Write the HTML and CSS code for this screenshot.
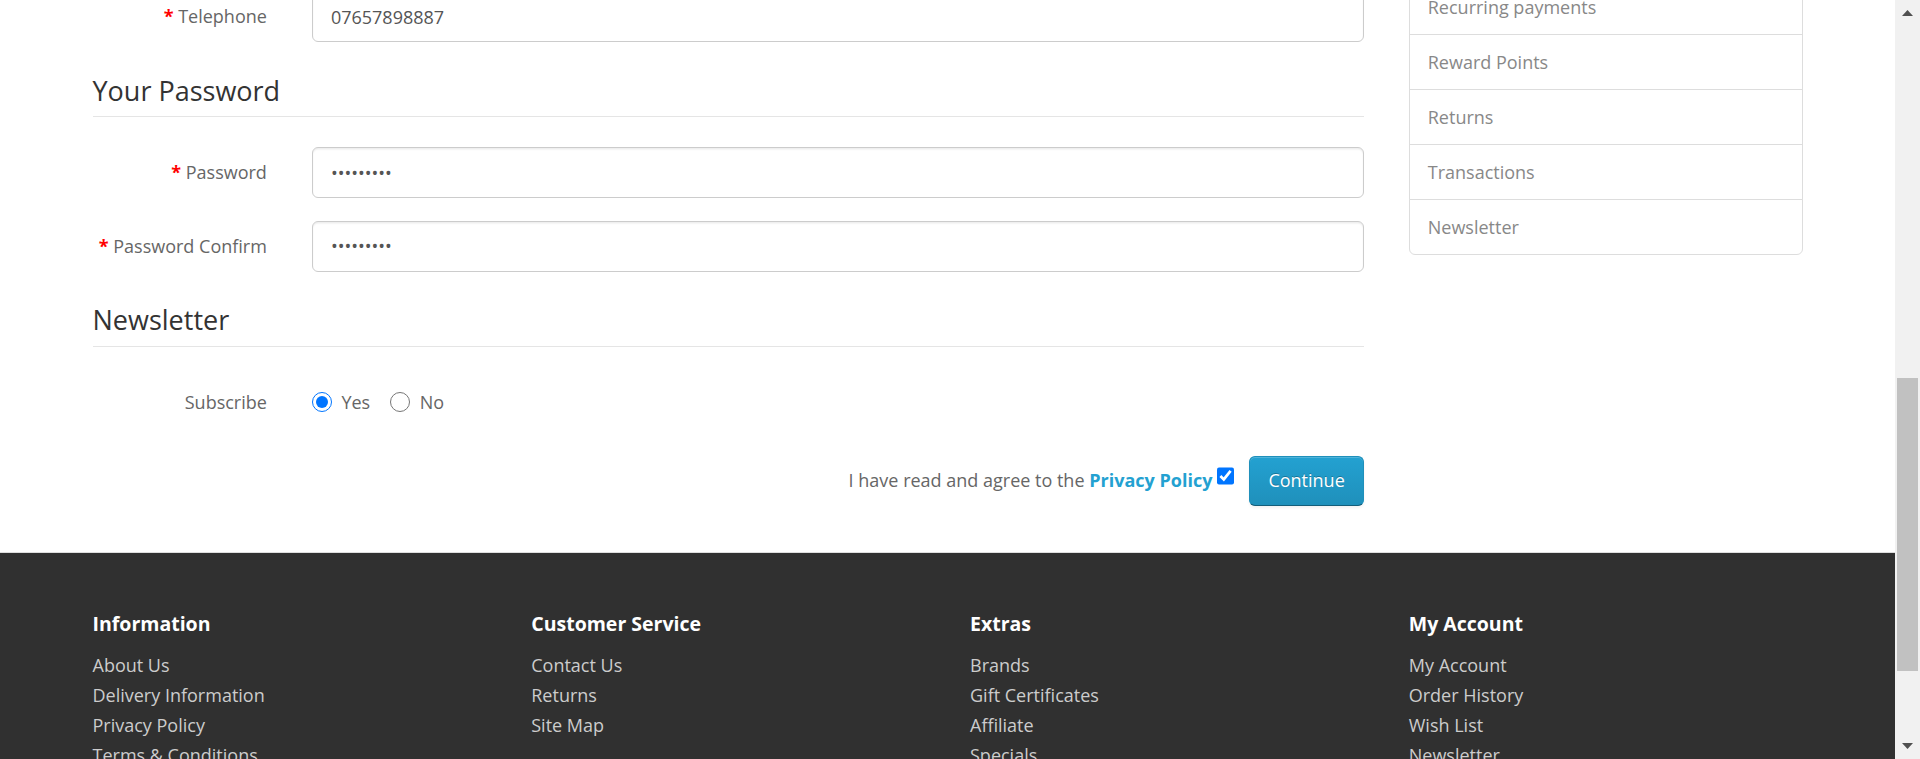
FILE: index.html
```html
<!DOCTYPE html>
<html lang="en">
<head>
<meta charset="utf-8">
<title>Register Account</title>
<link rel="stylesheet" href="styles.css">
</head>
<body>
<div class="viewport">
  <div class="container main">
    <div class="row">
      <div class="col-9">
        <form class="form-horizontal">
          <fieldset>
            <div class="form-group required">
              <label class="control-label" for="tel">Telephone</label>
              <div class="field"><input id="tel" class="form-control" type="tel" value="07657898887"></div>
            </div>
          </fieldset>
          <fieldset>
            <legend>Your Password</legend>
            <div class="form-group required">
              <label class="control-label" for="pw">Password</label>
              <div class="field"><input id="pw" class="form-control" type="password" value="123456789"></div>
            </div>
            <div class="form-group required">
              <label class="control-label" for="pw2">Password Confirm</label>
              <div class="field"><input id="pw2" class="form-control" type="password" value="123456789"></div>
            </div>
          </fieldset>
          <fieldset>
            <legend>Newsletter</legend>
            <div class="form-group">
              <label class="control-label">Subscribe</label>
              <div class="field radios">
                <label class="radio-inline"><input type="radio" name="newsletter" value="1" checked>Yes</label>
                <label class="radio-inline"><input type="radio" name="newsletter" value="0">No</label>
              </div>
            </div>
          </fieldset>
          <div class="buttons">
            <span class="agree-text">I have read and agree to the <a class="agree" href="#"><b>Privacy Policy</b></a></span>
            <input class="agree-box" type="checkbox" name="agree" value="1" checked>
            <button type="button" class="btn btn-primary">Continue</button>
          </div>
        </form>
      </div>
      <aside class="col-3">
        <div class="list-group">
          <a href="#" class="list-group-item">Recurring payments</a>
          <a href="#" class="list-group-item">Reward Points</a>
          <a href="#" class="list-group-item">Returns</a>
          <a href="#" class="list-group-item">Transactions</a>
          <a href="#" class="list-group-item">Newsletter</a>
        </div>
      </aside>
    </div>
  </div>
  <footer class="footer">
    <div class="container">
      <div class="row">
        <div class="col-3">
          <h5>Information</h5>
          <ul class="links">
            <li><a href="#">About Us</a></li>
            <li><a href="#">Delivery Information</a></li>
            <li><a href="#">Privacy Policy</a></li>
            <li><a href="#">Terms &amp; Conditions</a></li>
          </ul>
        </div>
        <div class="col-3">
          <h5>Customer Service</h5>
          <ul class="links">
            <li><a href="#">Contact Us</a></li>
            <li><a href="#">Returns</a></li>
            <li><a href="#">Site Map</a></li>
          </ul>
        </div>
        <div class="col-3">
          <h5>Extras</h5>
          <ul class="links">
            <li><a href="#">Brands</a></li>
            <li><a href="#">Gift Certificates</a></li>
            <li><a href="#">Affiliate</a></li>
            <li><a href="#">Specials</a></li>
          </ul>
        </div>
        <div class="col-3">
          <h5>My Account</h5>
          <ul class="links">
            <li><a href="#">My Account</a></li>
            <li><a href="#">Order History</a></li>
            <li><a href="#">Wish List</a></li>
            <li><a href="#">Newsletter</a></li>
          </ul>
        </div>
      </div>
    </div>
  </footer>
</div>
<div class="scrollbar">
  <div class="sb-btn"><svg width="25" height="25" viewBox="0 0 25 25"><polygon points="7,16 18,16 12.5,10" fill="#505050"/></svg></div>
  <div class="sb-track"><div class="sb-thumb"></div></div>
  <div class="sb-btn"><svg width="25" height="25" viewBox="0 0 25 25"><polygon points="7,9 18,9 12.5,15" fill="#505050"/></svg></div>
</div>
</body>
</html>
```

FILE: styles.css
```css
* { box-sizing: border-box; }

html, body {
  margin: 0;
  padding: 0;
  height: 759px;
  overflow: hidden;
}

body {
  display: flex;
  font-family: "Open Sans", "Noto Sans", sans-serif;
  font-size: 18px;
  line-height: 30px;
  color: #666;
  background: #fff;
}

.viewport {
  flex: 1;
  min-width: 0;
  height: 759px;
  overflow: hidden;
}

.container {
  width: 1755px;
  margin: 0 auto;
  padding: 0 22.5px;
}

.row {
  display: flex;
  margin: 0 -22.5px;
}

.col-9 {
  width: 75%;
  padding: 0 22.5px;
}

.col-3 {
  width: 25%;
  padding: 0 22.5px;
}

.main {
  margin-top: -9px;
}

/* form */
fieldset {
  border: 0;
  margin: 0;
  padding: 0;
  min-width: 0;
}

legend {
  display: block;
  width: 100%;
  padding: 11px 0 10.5px;
  margin: 0 0 30px;
  font-size: 27px;
  line-height: 30px;
  color: #333;
  border-bottom: 1px solid #e5e5e5;
}

.form-group {
  display: flex;
  margin: 0 -22.5px 22.5px;
}

.control-label {
  width: 16.6667%;
  padding: 10px 22.5px 0;
  text-align: right;
  font-weight: normal;
  color: #666;
}

.required .control-label::before {
  content: "* ";
  color: #f00;
  font-weight: bold;
}

.field {
  width: 83.3333%;
  padding: 0 22.5px;
}

.form-control {
  display: block;
  width: 100%;
  height: 51px;
  padding: 9px 18px;
  font-family: "Open Sans", "Noto Sans", sans-serif;
  font-size: 18px;
  line-height: 25.7px;
  color: #555;
  background: #fff;
  border: 1px solid #ccc;
  border-radius: 6px;
  box-shadow: inset 0 1.5px 1.5px rgba(0, 0, 0, 0.075);
  outline: none;
}

.radios {
  display: flex;
  padding-top: 10px;
}

.radio-inline {
  display: inline-flex;
  align-items: center;
  height: 30px;
  margin-right: 20px;
  cursor: pointer;
}

.radio-inline input {
  width: 20px;
  height: 20px;
  margin: 0 9.5px 0 0;
  accent-color: #0075ff;
}

.buttons {
  display: flex;
  justify-content: flex-end;
  align-items: flex-start;
  margin: 17px 0 19px;
}

.agree-text {
  margin-top: 8.5px;
}

.agree {
  color: #23a1d1;
  text-decoration: none;
}

.agree b {
  font-weight: bold;
}

.agree-box {
  width: 17px;
  height: 18px;
  margin: 10.7px 0 0 5px;
  accent-color: #0075ff;
}

.btn {
  margin-left: 15px;
  padding: 11.25px 18px;
  font-family: "Open Sans", "Noto Sans", sans-serif;
  font-size: 18px;
  line-height: 25.7px;
  border-radius: 6px;
  cursor: pointer;
}

.btn-primary {
  color: #fff;
  text-shadow: 0 -1.5px 0 rgba(0, 0, 0, 0.25);
  background-color: #229ac8;
  background-image: linear-gradient(to bottom, #23a1d1, #1f90bb);
  border: 1px solid;
  border-color: #1f90bb #1f90bb #145e7a;
  box-shadow: inset 0 1px 0 rgba(255, 255, 255, 0.2), 0 1.5px 3px rgba(0, 0, 0, 0.05);
}

/* sidebar */
.list-group {
  margin-top: -11.7px;
}

.list-group-item {
  display: block;
  padding: 12px 18px;
  margin-bottom: -1px;
  color: #888;
  text-decoration: none;
  background: #fff;
  border: 1px solid #ddd;
}

.list-group-item:last-child {
  border-radius: 0 0 6px 6px;
}

/* footer */
.footer {
  margin-top: 27px;
  padding-top: 45px;
  background: #303030;
  border-top: 1px solid #ddd;
  color: #e2e2e2;
  height: 300px;
}

.footer h5 {
  margin: 15px 0;
  font-size: 19.5px;
  line-height: 21.45px;
  font-weight: bold;
  color: #fff;
}

.links {
  list-style: none;
  margin: 0;
  padding: 0;
}

.links a {
  color: #ccc;
  text-decoration: none;
}

/* scrollbar */
.scrollbar {
  width: 25px;
  height: 759px;
  display: flex;
  flex-direction: column;
  background: #f1f1f1;
}

.sb-btn {
  height: 25px;
  flex: none;
}

.sb-btn svg {
  display: block;
}

.sb-track {
  flex: 1;
  padding: 353px 2px 0;
}

.sb-thumb {
  height: 293px;
  background: #c1c1c1;
}
```
